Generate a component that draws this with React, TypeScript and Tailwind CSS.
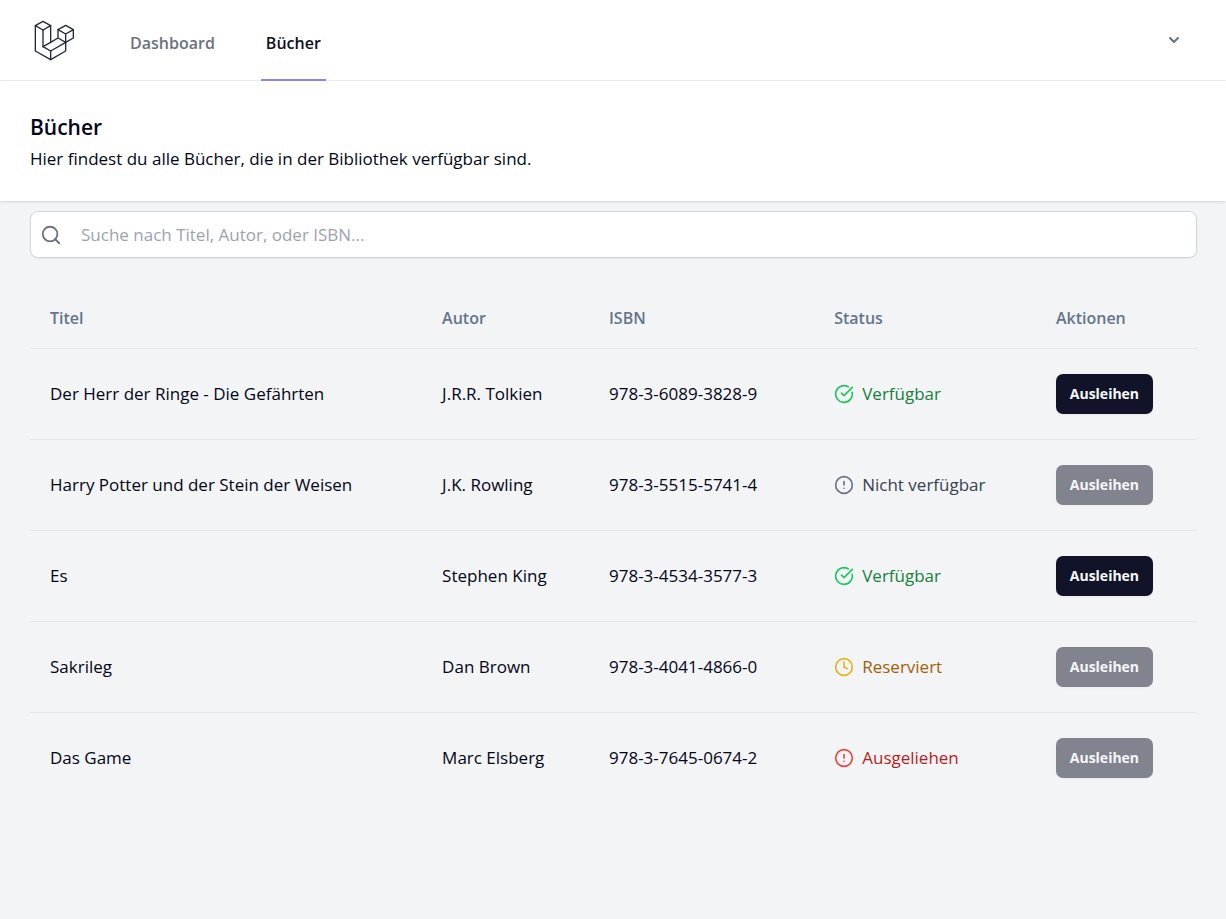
import { useState } from 'react';
import { CircleAlert, CircleCheckBig, Clock, Search } from 'lucide-react';

type Status = 'available' | 'unavailable' | 'reserved' | 'borrowed';

const BOOKS: { title: string; author: string; isbn: string; status: Status }[] = [
  { title: 'Der Herr der Ringe - Die Gefährten', author: 'J.R.R. Tolkien', isbn: '978-3-6089-3828-9', status: 'available' },
  { title: 'Harry Potter und der Stein der Weisen', author: 'J.K. Rowling', isbn: '978-3-5515-5741-4', status: 'unavailable' },
  { title: 'Es', author: 'Stephen King', isbn: '978-3-4534-3577-3', status: 'available' },
  { title: 'Sakrileg', author: 'Dan Brown', isbn: '978-3-4041-4866-0', status: 'reserved' },
  { title: 'Das Game', author: 'Marc Elsberg', isbn: '978-3-7645-0674-2', status: 'borrowed' },
];

const STATUS = {
  available: { label: 'Verfügbar', Icon: CircleCheckBig, icon: 'text-[#22c55e]', text: 'text-[#15803d]' },
  unavailable: { label: 'Nicht verfügbar', Icon: CircleAlert, icon: 'text-[#6b7280]', text: 'text-[#374151]' },
  reserved: { label: 'Reserviert', Icon: Clock, icon: 'text-[#e6b422]', text: 'text-[#a16207]' },
  borrowed: { label: 'Ausgeliehen', Icon: CircleAlert, icon: 'text-[#ef4444]', text: 'text-[#b91c1c]' },
};

function Logo() {
  return (
    <svg viewBox="0 0 132 132" className="size-11 text-[#1f2937]" fill="none" stroke="currentColor" strokeWidth="4" strokeLinejoin="round" strokeLinecap="round" aria-hidden="true">
      <path d="M39 10 62 23 39 36 16 23Z" />
      <path d="M16 23V99L62 125L107 99V73" />
      <path d="M39 36V86L62 99V125" />
      <path d="M62 23V73L39 86" />
      <path d="M62 99L107 73" />
      <path d="M62 73L84 60L107 73L130 60V35L107 22L84 35V60" />
      <path d="M84 35L107 48L130 35M107 48V73" />
    </svg>
  );
}

function StatusLabel({ status }: { status: Status }) {
  const { label, Icon, icon, text } = STATUS[status];
  return (
    <span className="flex items-center gap-2">
      <Icon size={20} className={icon} aria-hidden="true" />
      <span className={text}>{label}</span>
    </span>
  );
}

export default function App() {
  const [query, setQuery] = useState('');
  const needle = query.trim().toLowerCase();
  const books = BOOKS.filter((b) => `${b.title} ${b.author} ${b.isbn}`.toLowerCase().includes(needle));

  return (
    <div className="min-h-screen bg-[#f3f4f6] font-['Open_Sans','Noto_Sans',sans-serif] text-[17px] leading-6 text-[#020617]">
      <nav className="flex h-[81px] items-stretch justify-between border-b border-[#eeeff2] bg-white pr-[29px] pl-[30px]">
        <div className="-mb-px flex">
          <a href="#" aria-label="Startseite" className="mr-[51px] flex items-center pb-0.5">
            <Logo />
          </a>
          <a href="#dashboard" className="mr-[41px] flex items-center border-b-2 border-transparent px-[5px] pt-1.5 text-base font-semibold text-[#6b7280]">
            Dashboard
          </a>
          <a href="#buecher" aria-current="page" className="flex items-center border-b-2 border-[#8b85f0] px-[5px] pt-1.5 text-base font-semibold text-[#0f1020]">
            Bücher
          </a>
        </div>
        <button type="button" aria-label="Benutzermenü" className="flex items-center px-[13px] text-[#6b7280]">
          <svg viewBox="0 0 20 20" className="size-5" fill="currentColor" aria-hidden="true">
            <path fillRule="evenodd" clipRule="evenodd" d="M5.293 7.293a1 1 0 011.414 0L10 10.586l3.293-3.293a1 1 0 111.414 1.414l-4 4a1 1 0 01-1.414 0l-4-4a1 1 0 010-1.414z" />
          </svg>
        </button>
      </nav>

      <header className="bg-white py-[30px] pr-[29px] pl-[30px] shadow">
        <h1 className="text-[21px] leading-8 font-semibold">Bücher</h1>
        <p className="mt-1">Hier findest du alle Bücher, die in der Bibliothek verfügbar sind.</p>
      </header>

      <main className="pt-2.5 pr-[29px] pl-[30px]">
        <label className="flex h-[47px] items-center gap-[19px] rounded-lg border border-[#d1d5db] bg-white px-[9px] shadow-xs">
          <Search size={22} className="shrink-0 text-[#6b7280]" aria-hidden="true" />
          <input
            type="search"
            aria-label="Bücher suchen"
            value={query}
            onChange={(e) => setQuery(e.target.value)}
            placeholder="Suche nach Titel, Autor, oder ISBN..."
            className="w-full bg-transparent outline-none placeholder:text-[#9ca3af]"
          />
        </label>

        <table className="mt-[30px] w-full table-fixed text-left">
          <thead>
            <tr className="h-[60px] border-b border-[#e2e8f0] text-base text-[#64748b]">
              <th className="w-[33.6%] px-5 font-semibold">Titel</th>
              <th className="w-[14.3%] px-5 font-semibold">Autor</th>
              <th className="w-[19.3%] px-5 font-semibold">ISBN</th>
              <th className="w-[19%] px-5 font-semibold">Status</th>
              <th className="px-5 font-semibold">Aktionen</th>
            </tr>
          </thead>
          <tbody>
            {books.map((book) => (
              <tr key={book.isbn} className="h-[91px] border-b border-[#e2e8f0] last:border-0">
                <td className="px-5">{book.title}</td>
                <td className="px-5 whitespace-nowrap">{book.author}</td>
                <td className="px-5 whitespace-nowrap">{book.isbn}</td>
                <td className="px-5 whitespace-nowrap">
                  <StatusLabel status={book.status} />
                </td>
                <td className="px-5">
                  <button
                    type="button"
                    disabled={book.status !== 'available'}
                    className="flex h-10 w-[97px] items-center justify-center rounded-[7px] bg-[#111428] text-sm font-bold text-[#f8fafc] shadow-xs disabled:opacity-50"
                  >
                    Ausleihen
                  </button>
                </td>
              </tr>
            ))}
          </tbody>
        </table>
      </main>
    </div>
  );
}
